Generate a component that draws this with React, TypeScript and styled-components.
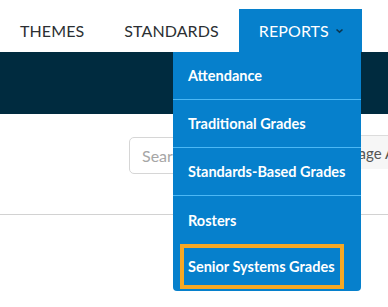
import React from "react";
import styled, { createGlobalStyle } from "styled-components";

const Global = createGlobalStyle`
  html, body { margin: 0; padding: 0; background: #fff; }
  body { font-family: Lato, "Open Sans", sans-serif; overflow: hidden; }
`;

const Page = styled.div`
  width: 388px;
  height: 307px;
  position: relative;
  overflow: hidden;
`;

const NavBar = styled.nav`
  display: flex;
  align-items: flex-end;
  gap: 2px;
  height: 52px;
  padding-left: 0;
  box-sizing: border-box;
`;

const NavItem = styled.div<{ $active?: boolean }>`
  position: relative;
  display: flex;
  align-items: center;
  gap: 6px;
  height: 43px;
  padding: 0 18px 0 20px;
  font-size: 16px;
  letter-spacing: 0.1px;
  text-transform: uppercase;
  color: ${(p) => (p.$active ? "#fff" : "#2b2f33")};
  background: ${(p) => (p.$active ? "#0680cc" : "transparent")};
  box-sizing: border-box;
  flex-shrink: 0;
`;

const Band = styled.div`
  height: 62px;
  background: #002b3f;
`;

const Toolbar = styled.div`
  display: flex;
  align-items: flex-start;
  padding: 21px 0 0 129px;
  height: 101px;
  box-sizing: border-box;
  border-bottom: 1px solid #d2d2d2;
`;

const Search = styled.div`
  flex-shrink: 0;
  width: 190px;
  height: 37px;
  margin-top: 2px;
  border: 1px solid #d6d6d6;
  border-radius: 5px;
  box-sizing: border-box;
  display: flex;
  align-items: center;
  padding-left: 12px;
  font-size: 16px;
  color: #a6a6a6;
`;

const Button = styled.div`
  flex-shrink: 0;
  height: 34px;
  margin-left: -2px;
  padding: 0 12px;
  border-top: 1px solid #dcdcdc;
  background: #f6f6f6;
  display: flex;
  align-items: center;
  font-size: 15px;
  color: #555;
  white-space: nowrap;
  box-sizing: border-box;
`;

const Menu = styled.div`
  position: absolute;
  left: 173px;
  top: 52px;
  width: 188px;
  background: #0680cc;
  border-radius: 0 0 4px 4px;
  display: flex;
  flex-direction: column;
  padding-bottom: 2px;
`;

const MenuItem = styled.div<{ $highlight?: boolean; $last?: boolean }>`
  height: ${(p) => (p.$highlight ? "45px" : "48px")};
  display: flex;
  align-items: center;
  font-size: 14.5px;
  font-weight: 700;
  color: #fff;
  white-space: nowrap;
  box-sizing: border-box;
  border-bottom: ${(p) => (p.$last ? "none" : "1px solid #4cb8f5")};
  padding-left: ${(p) => (p.$highlight ? "4px" : "15px")};
  margin: ${(p) => (p.$highlight ? "0 17px 0 7px" : "0")};
  ${(p) => (p.$highlight ? "border: 4px solid #f7a823;" : "")}
`;

const Chevron = () => (
  <svg width="9" height="6" viewBox="0 0 9 6">
    <path d="M1.5 1.5 L4.5 4.2 L7.5 1.5" stroke="#0b3650" strokeWidth="1.6" fill="none" />
  </svg>
);

export default function App() {
  return (
    <Page>
      <Global />
      <NavBar>
        <NavItem>Themes</NavItem>
        <NavItem>Standards</NavItem>
        <NavItem $active>
          Reports <Chevron />
        </NavItem>
      </NavBar>
      <Band />
      <Toolbar>
        <Search>Search...</Search>
        <Button>Manage Assessments</Button>
      </Toolbar>
      <Menu>
        <MenuItem>Attendance</MenuItem>
        <MenuItem>Traditional Grades</MenuItem>
        <MenuItem>Standards-Based Grades</MenuItem>
        <MenuItem $last>Rosters</MenuItem>
        <MenuItem $highlight $last>Senior Systems Grades</MenuItem>
      </Menu>
    </Page>
  );
}
